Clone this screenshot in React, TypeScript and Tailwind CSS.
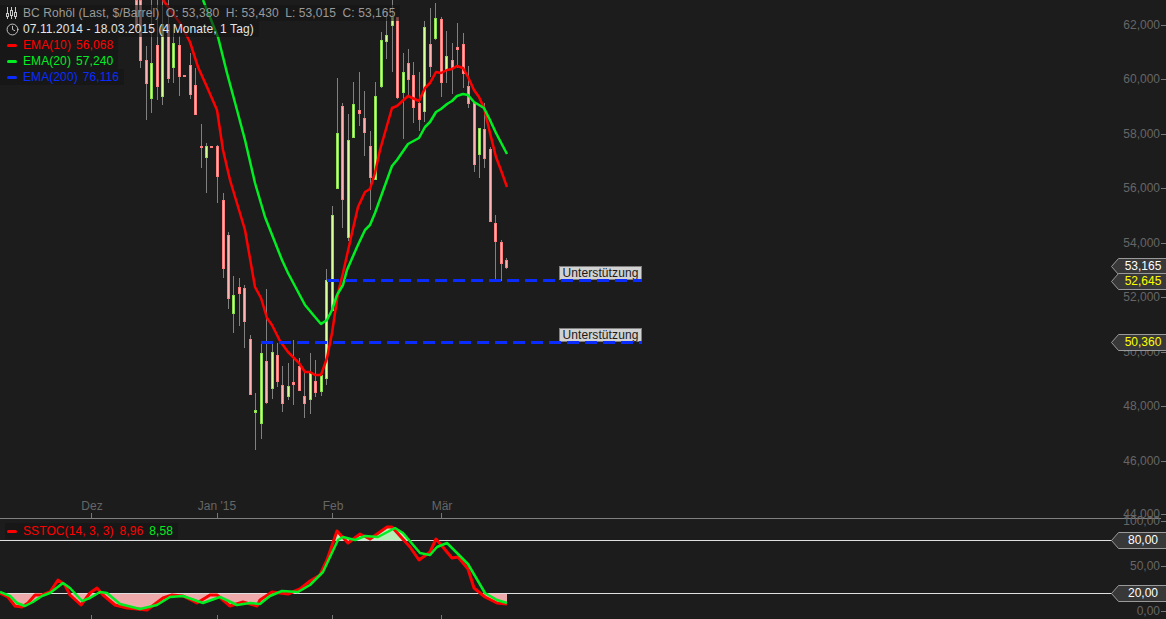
import { Clock } from "lucide-react";

type Candle = [x: number, wickTop: number, wickBottom: number, bodyTop: number, bodyBottom: number, up: boolean];

// x, wick top/bottom, body top/bottom (page pixels), up = green
const CANDLES: Candle[] = [
  [136, 0, 32, 0, 27, false],
  [140, 0, 68, 0, 60, false],
  [146, 46, 120, 60, 83, false],
  [151, 0, 113, 63, 98, true],
  [157, 0, 100, 45, 86, false],
  [162, 0, 105, 24, 96, true],
  [168, 0, 83, 24, 78, false],
  [173, 33, 83, 43, 67, true],
  [179, 36, 96, 45, 76, false],
  [184, 76, 76, 75, 76, false],
  [190, 53, 99, 65, 94, false],
  [195, 68, 114, 85, 114, false],
  [201, 124, 168, 146, 146, false],
  [206, 143, 193, 146, 157, true],
  [211, 146, 146, 146, 146, false],
  [217, 145, 203, 146, 176, false],
  [223, 193, 278, 200, 268, false],
  [228, 232, 309, 235, 298, false],
  [233, 276, 333, 295, 313, true],
  [239, 278, 326, 287, 293, false],
  [244, 285, 348, 288, 321, false],
  [250, 335, 394, 339, 394, false],
  [255, 393, 450, 410, 412, true],
  [261, 343, 439, 353, 423, true],
  [266, 289, 404, 361, 402, false],
  [272, 343, 399, 352, 388, true],
  [277, 343, 387, 355, 381, false],
  [282, 366, 412, 385, 403, false],
  [288, 363, 400, 386, 396, true],
  [293, 340, 405, 382, 384, false],
  [299, 358, 390, 366, 390, false],
  [304, 372, 418, 396, 403, false],
  [310, 353, 414, 373, 399, true],
  [315, 360, 397, 381, 392, false],
  [321, 375, 396, 375, 391, true],
  [326, 269, 385, 280, 378, true],
  [332, 206, 310, 215, 310, true],
  [337, 78, 188, 133, 188, true],
  [342, 103, 228, 106, 199, false],
  [348, 114, 241, 140, 237, true],
  [353, 82, 137, 104, 137, true],
  [359, 72, 126, 110, 113, false],
  [364, 91, 156, 118, 132, false],
  [370, 131, 210, 146, 177, false],
  [375, 82, 179, 96, 179, true],
  [381, 32, 88, 40, 86, true],
  [386, 13, 59, 35, 41, true],
  [392, 0, 72, 17, 25, true],
  [397, 17, 99, 17, 97, false],
  [403, 53, 139, 72, 92, true],
  [408, 49, 97, 63, 79, false],
  [413, 62, 123, 75, 107, false],
  [419, 72, 131, 103, 119, false],
  [424, 21, 122, 27, 111, true],
  [430, 8, 77, 44, 66, false],
  [435, 3, 40, 18, 38, true],
  [441, 17, 97, 19, 82, false],
  [446, 31, 83, 56, 69, true],
  [452, 43, 94, 60, 68, false],
  [457, 23, 68, 47, 49, false],
  [463, 33, 88, 44, 73, false],
  [468, 66, 108, 86, 103, false],
  [474, 103, 172, 103, 164, false],
  [479, 128, 178, 128, 154, true],
  [484, 103, 168, 129, 158, false],
  [490, 147, 222, 149, 221, false],
  [495, 215, 280, 223, 241, false],
  [501, 240, 281, 242, 263, false],
  [506, 258, 269, 260, 267, false],
];

const EMA_10 =
  "163,0 180,23 190,42 198,67 207,87 217,110 223,150 230,180 245,230 255,287 261,298 267,318 272,325 280,341 288,352 299,363 305,372 310,372 315,375 321,375 327,358 332,333 338,293 343,273 352,233 358,207 365,192 370,189 375,173 380,150 392,108 397,106 408,96 419,101 425,88 430,83 436,72 441,73 447,70 452,69 457,66 463,68 468,77 474,90 479,97 484,108 490,133 496,157 502,173 507,187";
const EMA_20 =
  "203,0 218,37 227,73 237,110 245,140 255,183 265,217 282,260 288,273 305,305 315,317 321,324 327,320 332,310 337,295 343,285 347,270 357,247 365,230 370,225 375,213 392,166 397,160 408,144 419,138 425,127 430,122 436,112 441,109 447,104 452,101 457,96 463,94 468,95 474,102 484,108 490,120 496,133 507,154";

const STOCH_FAST =
  "0,593 8,597 15,606 22,607 28,603 35,595 42,595 50,592 58,580 65,585 70,595 81,605 90,593 97,588 103,595 115,605 127,608 147,610 163,598 172,595 183,596 197,603 210,595 217,595 230,606 243,602 257,606 260,600 272,592 288,594 300,589 310,581 320,575 327,560 337,531 348,543 360,534 370,539 387,527 392,527 410,547 419,560 430,552 436,539 442,546 452,558 458,557 468,569 474,588 485,597 497,603 507,604";
const STOCH_SLOW =
  "0,592 10,596 17,603 25,606 33,602 42,596 50,593 63,583 70,588 82,601 90,598 100,592 107,593 120,604 140,609 157,605 170,597 183,596 203,603 220,597 237,605 250,603 260,604 270,596 282,591 298,592 310,585 323,572 330,557 338,540 343,537 355,540 365,536 378,537 395,528 403,533 420,553 430,555 437,547 447,543 457,553 468,564 485,593 497,600 507,603";

const MONTH_TICKS = [91, 217, 332, 441];

const PRICE_AXIS = [
  ["62,000", 25],
  ["60,000", 79],
  ["58,000", 134],
  ["56,000", 188],
  ["54,000", 243],
  ["52,000", 297],
  ["50,000", 352],
  ["48,000", 406],
  ["46,000", 461],
  ["44,000", 514],
] as const;

const STOCH_AXIS = [
  ["100,00", 521],
  ["50,00", 566],
  ["0,00", 611],
] as const;

const MONTHS = [
  ["Dez", 92],
  ["Jan '15", 217],
  ["Feb", 333],
  ["Mär", 442],
] as const;

function AxisLabel({ text, y }: { text: string; y: number }) {
  return (
    <div
      className="absolute right-0 flex h-[14px] items-center text-[12px] leading-none text-[#666666]"
      style={{ top: y - 7 }}
    >
      <span>{text}</span>
      <span className="ml-px h-px w-[5px] bg-[#777777]" />
    </div>
  );
}

function PriceTag({ text, y, color }: { text: string; y: number; color: string }) {
  return (
    <div className="absolute left-[1111px] h-[17px] w-[55px]" style={{ top: y - 8.5 }}>
      <svg width="55" height="17" className="absolute inset-0">
        <path d="M55 .5H7.5L.5 8.5l7 8H55" fill="#383838" stroke="#9a9a9a" />
      </svg>
      <span
        className="absolute left-[7px] top-0 w-[50px] text-center text-[12px] leading-[17px]"
        style={{ color }}
      >
        {text}
      </span>
    </div>
  );
}

function SupportLevel({ y, from }: { y: number; from: number }) {
  return (
    <line x1={from} x2={642} y1={y} y2={y} stroke="#0a2cff" strokeWidth="3" strokeDasharray="12 6" />
  );
}

function LegendRow({ label, value, color }: { label: string; value: string; color: string }) {
  return (
    <div className="flex h-4 w-fit items-center bg-[#141414]/60 pl-[7px] pr-[5px]" style={{ color }}>
      <span className="mr-[6px] h-[3px] w-[10px] rounded-full" style={{ backgroundColor: color }} />
      <span>{label}</span>
      <span className="ml-[5px]">{value}</span>
    </div>
  );
}

function SupportTag({ top }: { top: string }) {
  return (
    <div
      className={`absolute left-[559px] flex h-[14px] w-[83px] items-center justify-center border border-[#808080] bg-[#d2d2d2] text-[12px] leading-none tracking-[0.09px] text-[#1a1a1a] ${top}`}
    >
      Unterstützung
    </div>
  );
}

export default function App() {
  return (
    <div className="relative flex h-[619px] w-[1166px] flex-col overflow-hidden bg-[#1c1c1c] font-['Liberation_Sans',Arial,sans-serif]">
      {/* price panel */}
      <div className="relative h-[518px] shrink-0">
        <SupportTag top="top-[266px]" />
        <SupportTag top="top-[328px]" />

        <svg width="1166" height="518" className="absolute inset-0">
          {CANDLES.map(([x, wt, wb, bt, bb, up]) => (
            <g key={x}>
              {wb > wt && <rect x={x} y={wt} width="1" height={wb - wt} fill="#808080" />}
              <rect
                x={x - 0.5}
                y={bt + 0.5}
                width="2"
                height={Math.max(bb - bt, 1)}
                fill={up ? "#d8ff9c" : "#ffb4b4"}
                stroke={up ? "#8ce050" : "#ff7f7f"}
                strokeWidth="1"
              />
            </g>
          ))}
          <polyline points={EMA_10} fill="none" stroke="#ff0000" strokeWidth="2.5" strokeLinejoin="round" />
          <polyline points={EMA_20} fill="none" stroke="#00ee22" strokeWidth="2.5" strokeLinejoin="round" />
          <SupportLevel y={280.5} from={327} />
          <SupportLevel y={342.5} from={261} />
          {MONTH_TICKS.map((x) => (
            <rect key={x} x={x} y="513" width="1" height="5" fill="#777777" />
          ))}
        </svg>

        {MONTHS.map(([name, x]) => (
          <span
            key={name}
            className="absolute top-[499px] -translate-x-1/2 text-[12px] leading-[14px] text-[#666666]"
            style={{ left: x }}
          >
            {name}
          </span>
        ))}

        {PRICE_AXIS.map(([text, y]) => (
          <AxisLabel key={text} text={text} y={y} />
        ))}

        <PriceTag text="53,165" y={266} color="#ffffff" />
        <PriceTag text="52,645" y={281} color="#ffff00" />
        <PriceTag text="50,360" y={342.5} color="#ffff00" />

        {/* legend */}
        <div className="absolute left-0 top-[5px] flex flex-col text-[12px] leading-4 tracking-[0.09px]">
          <div className="flex h-4 w-fit items-center gap-[6.5px] bg-[#141414]/60 pl-[6px] pr-[5px] text-[#9a9a9a]">
            <svg width="11" height="12" viewBox="0 0 11 12" className="mr-[-0.5px] text-[#c8c8c8]">
              <path d="M1.5 0v12M5.5 0v12M9.5 0v12" stroke="currentColor" />
              <rect x=".5" y="6.5" width="2" height="3" fill="#1c1c1c" stroke="currentColor" />
              <rect x="4.5" y="3.5" width="2" height="5" fill="#1c1c1c" stroke="currentColor" />
              <rect x="8.5" y="5.5" width="2" height="4" fill="#1c1c1c" stroke="currentColor" />
            </svg>
            <span>BC Rohöl (Last, $/Barrel)</span>
            <span>O: 53,380</span>
            <span>H: 53,430</span>
            <span>L: 53,015</span>
            <span>C: 53,165</span>
          </div>
          <div className="flex h-4 w-fit items-center bg-[#141414]/60 pl-[6px] pr-[5px] text-[#e4e4e4]">
            <Clock size={13} strokeWidth={1.5} className="mr-[4px]" />
            <span>07.11.2014 - 18.03.2015 (4 Monate, 1 Tag)</span>
          </div>
          <LegendRow label="EMA(10)" value="56,068" color="#ff0000" />
          <LegendRow label="EMA(20)" value="57,240" color="#00ee22" />
          <LegendRow label="EMA(200)" value="76,116" color="#0a2cff" />
        </div>
      </div>

      {/* stochastic panel */}
      <div className="relative w-full flex-1">
        <div className="absolute left-0 top-0 h-px w-[1161px] bg-[#808080]" />
        <svg
          width="1166"
          height="101"
          viewBox="0 518 1166 101"
          className="absolute inset-0"
        >
          <defs>
            <clipPath id="below20">
              <rect x="0" y="593.5" width="507" height="26" />
            </clipPath>
            <clipPath id="above80">
              <rect x="0" y="518" width="507" height="22" />
            </clipPath>
          </defs>
          {MONTH_TICKS.map((x) => (
            <rect key={x} x={x} y="615" width="1" height="4" fill="#777777" />
          ))}
          <polygon points={`0,593.5 ${STOCH_FAST} 507,593.5`} fill="#eeaaaa" clipPath="url(#below20)" />
          <polygon points={`0,593.5 ${STOCH_SLOW} 507,593.5`} fill="#eeaaaa" clipPath="url(#below20)" />
          <polygon points={`0,540 ${STOCH_FAST} 507,540`} fill="#b6ecb6" clipPath="url(#above80)" />
          <polygon points={`0,540 ${STOCH_SLOW} 507,540`} fill="#b6ecb6" clipPath="url(#above80)" />
          <rect x="0" y="540" width="1112" height="1" fill="#e0e0e0" />
          <rect x="0" y="593" width="1112" height="1" fill="#e0e0e0" />
          <polyline points={STOCH_FAST} fill="none" stroke="#ff0000" strokeWidth="3" strokeLinejoin="round" />
          <polyline points={STOCH_SLOW} fill="none" stroke="#00ee22" strokeWidth="2.5" strokeLinejoin="round" />
        </svg>

        {STOCH_AXIS.map(([text, y]) => (
          <AxisLabel key={text} text={text} y={y - 518} />
        ))}
        <PriceTag text="80,00" y={22.5} color="#ffffff" />
        <PriceTag text="20,00" y={75.5} color="#ffffff" />

        <div className="absolute left-[5px] top-[5px] flex h-4 w-fit items-center bg-[#141414]/60 pl-[2px] pr-[5px] text-[12px] leading-4 tracking-[0.09px] text-[#ff0000]">
          <span className="mr-[6px] h-[3px] w-[10px] rounded-full bg-[#ff0000]" />
          <span>SSTOC(14, 3, 3)</span>
          <span className="ml-[6px]">8,96</span>
          <span className="ml-[6px] text-[#00ee22]">8,58</span>
        </div>
      </div>
    </div>
  );
}
